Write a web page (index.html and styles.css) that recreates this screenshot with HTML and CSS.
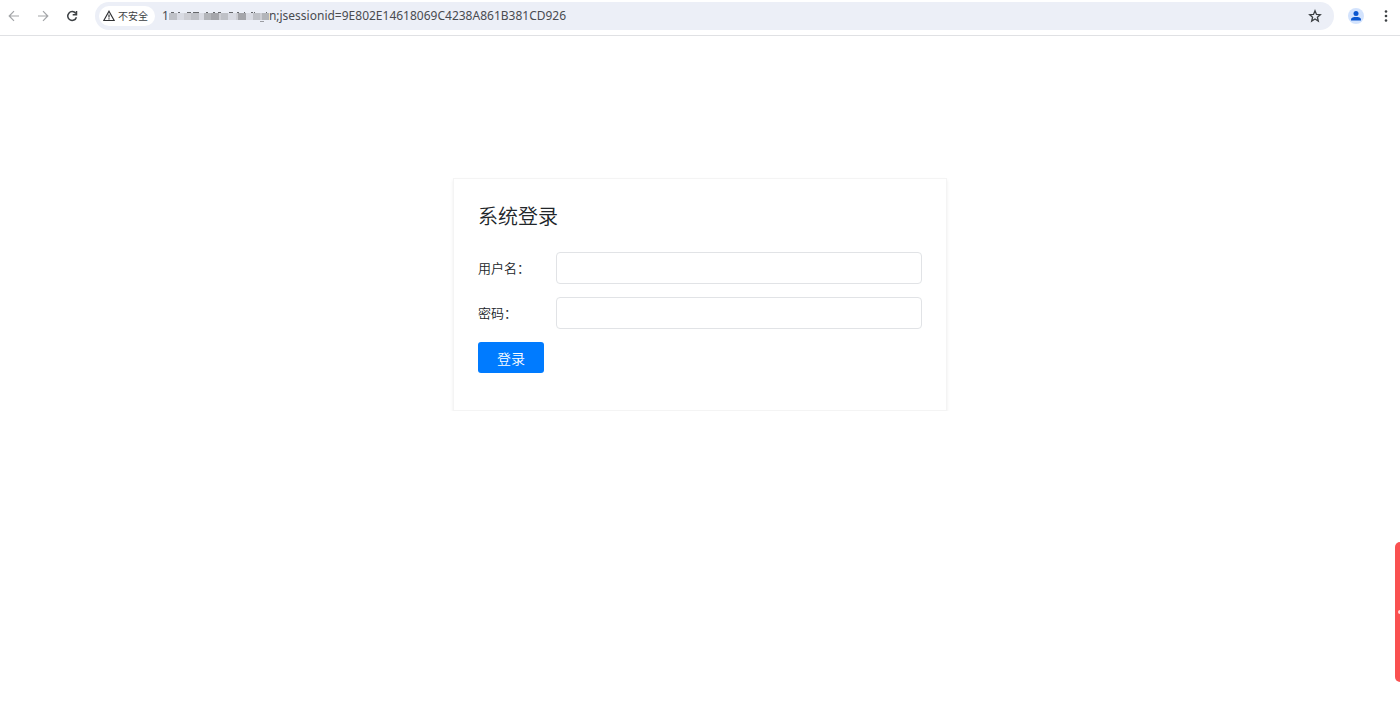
FILE: index.html
```html
<!DOCTYPE html>
<html lang="zh-CN">
<head>
<meta charset="utf-8">
<meta name="viewport" content="width=device-width, initial-scale=1">
<title>系统登录</title>
<link rel="stylesheet" href="styles.css">
</head>
<body>
<header class="toolbar">
  <button class="icon-button" type="button" aria-label="后退">
    <svg class="icon muted" viewBox="0 0 12 12"><path d="M11 6H1.5M6 1.2L1.2 6L6 10.8"/></svg>
  </button>
  <button class="icon-button" type="button" aria-label="前进">
    <svg class="icon muted" viewBox="0 0 12 12"><path d="M1 6h9.500M6 1.200L10.800 6L6 10.800"/></svg>
  </button>
  <button class="icon-button" type="button" aria-label="刷新">
    <svg class="icon reload" viewBox="0 0 12 12"><path d="M9.700 3.400A4.400 4.400 0 1 0 10.400 7.200M10.500 1v3.800H6.700"/></svg>
  </button>
  <div class="address">
    <button class="security" type="button">
      <svg class="warning" viewBox="0 0 12 12"><path d="M6 1.300L11.200 10.500H.8ZM6 4.500v3M6 8.200v1.200"/></svg>
      <span>不安全</span>
    </button>
    <div class="url">
      <span>1</span>
      <svg class="mosaic" viewBox="0 0 100 14" aria-hidden="true">
        <path fill="#cdced4" d="M0 4h100v7H0z"/>
        <path fill="#bfc1c7" d="M0 4h8v7H0zM22 4h8v7h-8zM52 4h7v7h-7zM84 4h7v7h-7z"/>
        <path fill="#d9dbe3" d="M8 4h7v7H8zM30 4h7v7h-7zM59 4h8v7h-8zM77 4h7v7h-7z"/>
        <path fill="#a4a5aa" d="M42 4h8v7h-8zM69 4h8v7h-8z"/>
        <path fill="#b3b5ba" d="M35 4h7v7h-7zM93 4h7v7h-7z"/>
        <path fill="#65676b" d="M2 3h3v1H2zM9 3h2v1H9zM18 3h4v1h-4zM24 3h6v1h-6zM37 3h2v1h-2zM44 3h2v1h-2zM49 3h3v1h-3zM60 3h4v1h-4zM68 3h2v1h-2zM75 3h1v1h-1zM82 3h2v1h-2zM85 3h1v1h-1zM97 3h1v1h-1z"/>
        <path fill="#9b9da2" d="M91 12h4v1h-4z"/>
      </svg>
      <span>n;jsessionid=9E802E14618069C4238A861B381CD926</span>
    </div>
    <button class="star-button" type="button" aria-label="收藏">
      <svg class="star" viewBox="0 0 14 14"><path d="M7 1.800L8.500 5.400L12.300 5.700L9.400 8.200L10.300 12L7 9.900L3.700 12L4.600 8.200L1.700 5.700L5.500 5.400Z"/></svg>
    </button>
  </div>
  <button class="profile" type="button" aria-label="个人资料">
    <svg class="avatar" viewBox="0 0 16 16"><circle cx="8" cy="8" r="8" fill="#d3e3fd"/><circle cx="8" cy="5.500" r="2.500" fill="#0b57d0"/><path fill="#0b57d0" d="M3 12.500v-1.200C3 9.600 5.500 9 8 9s5 .6 5 2.300v1.200Z"/></svg>
  </button>
  <button class="more" type="button" aria-label="更多">
    <svg class="dots" viewBox="0 0 4 14"><circle cx="2" cy="2.500" r="1.300"/><circle cx="2" cy="7" r="1.300"/><circle cx="2" cy="11.500" r="1.300"/></svg>
  </button>
</header>
<main class="page">
  <form class="card">
    <h1 class="title">系统登录</h1>
    <div class="field">
      <label for="username">用户名：</label>
      <input id="username" type="text" name="username">
    </div>
    <div class="field">
      <label for="password">密码：</label>
      <input id="password" type="password" name="password">
    </div>
    <button class="submit" type="submit">登录</button>
  </form>
</main>
<button class="side-tab" type="button" aria-label="展开侧栏"><span class="side-dot"></span></button>
</body>
</html>
```
FILE: styles.css
```css
* {
  box-sizing: border-box;
}

body {
  margin: 0;
  background: #fff;
  color: #212529;
  font-family: "Noto Sans", "Noto Sans CJK SC", sans-serif;
}

button {
  padding: 0;
  border: 0;
  background: none;
  color: inherit;
  font: inherit;
}

svg {
  display: block;
  flex: none;
}

.toolbar {
  display: flex;
  align-items: center;
  height: 36px;
  padding: 0 8px 4px 0;
  border-bottom: 1px solid #e0e1e4;
}

.icon-button {
  display: grid;
  place-items: center;
  width: 28px;
  height: 28px;
  margin-right: 1px;
}

.icon {
  width: 12px;
  height: 12px;
  fill: none;
  stroke: #3c4043;
  stroke-width: 1.5;
}

.icon.muted {
  stroke: #a3a5a8;
  stroke-width: 1.2;
}

.address {
  display: flex;
  flex: 1;
  align-items: center;
  height: 28px;
  margin-left: 8px;
  padding: 0 12px 0 4px;
  border-radius: 14px;
  background: #eceff7;
}

.security {
  display: flex;
  align-items: center;
  gap: 3px;
  height: 20px;
  padding: 0 7px 0 4px;
  border-radius: 10px;
  background: #fff;
  color: #3c4043;
  font-family: "Noto Sans CJK SC", sans-serif;
  font-size: 10px;
}

.warning {
  width: 12px;
  height: 12px;
  fill: none;
  stroke: #303134;
  stroke-width: 1.2;
}

.url {
  display: flex;
  flex: 1;
  align-items: center;
  margin-left: 7px;
  color: #494b50;
  font-size: 12px;
  line-height: 16px;
}

.mosaic {
  width: 100px;
  height: 14px;
}

.star {
  width: 14px;
  height: 14px;
  fill: none;
  stroke: #3c4043;
  stroke-width: 1.3;
}

.profile {
  margin-left: 14px;
}

.avatar {
  width: 16px;
  height: 16px;
}

.more {
  margin-left: 20px;
  padding-right: 4px;
}

.dots {
  width: 4px;
  height: 14px;
  fill: #3c4043;
}

.page {
  padding: 142px 16px 0;
}

.card {
  max-width: 494px;
  margin: 0 auto;
  padding: 23px 24px 37px;
  border: 1px solid #f4f4f4;
  box-shadow: 0 2px 3px rgba(0, 0, 0, 0.08);
  font-family: "Noto Sans CJK SC", sans-serif;
  font-weight: 350;
}

.title {
  margin: 0 0 23px;
  font-size: 20px;
  font-weight: inherit;
  line-height: 27px;
}

.field {
  display: flex;
  align-items: center;
  margin-bottom: 13px;
}

.field label {
  width: 78px;
  font-size: 13px;
  line-height: 20px;
}

.field input {
  flex: 1;
  min-width: 0;
  height: 32px;
  padding: 4px 10px;
  border: 1px solid #e1e3e6;
  border-radius: 4px;
  background: #fff;
  font: inherit;
  font-size: 13px;
}

.submit {
  display: block;
  width: 66px;
  height: 31px;
  border-radius: 3px;
  background: #007bff;
  color: #fff;
  font-size: 14px;
  line-height: 20px;
}

.side-tab {
  position: fixed;
  right: 0;
  bottom: 35px;
  display: flex;
  align-items: center;
  justify-content: flex-end;
  width: 5px;
  height: 140px;
  border-radius: 5px 0 0 5px;
  background: #fa5151;
}

.side-dot {
  width: 2px;
  height: 4px;
  border-radius: 2px 0 0 2px;
  background: #fdd;
}
```
